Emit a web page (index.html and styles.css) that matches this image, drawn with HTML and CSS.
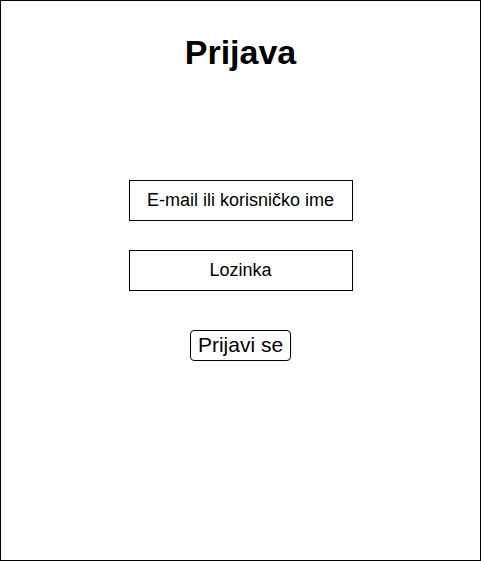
FILE: index.html
```html
<!DOCTYPE html>
<html lang="hr">
<head>
<meta charset="utf-8">
<title>Prijava</title>
<link rel="stylesheet" href="styles.css">
</head>
<body>
<main class="page">
  <h1 class="title">Prijava</h1>
  <form class="form">
    <div class="field">E-mail ili korisničko ime</div>
    <div class="field">Lozinka</div>
    <button type="button" class="btn">Prijavi se</button>
  </form>
</main>
</body>
</html>
```
FILE: styles.css
```css
html, body {
  margin: 0;
  padding: 0;
  background: #fff;
}
.page {
  box-sizing: border-box;
  width: 481px;
  height: 561px;
  border: 1px solid #000;
  display: flex;
  flex-direction: column;
  align-items: center;
  font-family: "Liberation Sans", Arial, sans-serif;
  color: #000;
}
.title {
  margin: 31px 0 0 0;
  font-size: 34px;
  line-height: 40px;
  font-weight: bold;
}
.form {
  margin-top: 108px;
  display: flex;
  flex-direction: column;
  align-items: center;
}
.field {
  box-sizing: border-box;
  width: 224px;
  height: 41px;
  border: 1px solid #000;
  display: flex;
  align-items: center;
  justify-content: center;
  font-size: 18px;
  margin-bottom: 29px;
}
.btn {
  box-sizing: border-box;
  margin-top: 10px;
  width: 101px;
  height: 31px;
  border: 1px solid #000;
  border-radius: 4px;
  background: #fff;
  font-family: "Liberation Sans", Arial, sans-serif;
  font-size: 21px;
  color: #000;
  padding: 0 0 2px 0;
  display: flex;
  align-items: center;
  justify-content: center;
}
```
